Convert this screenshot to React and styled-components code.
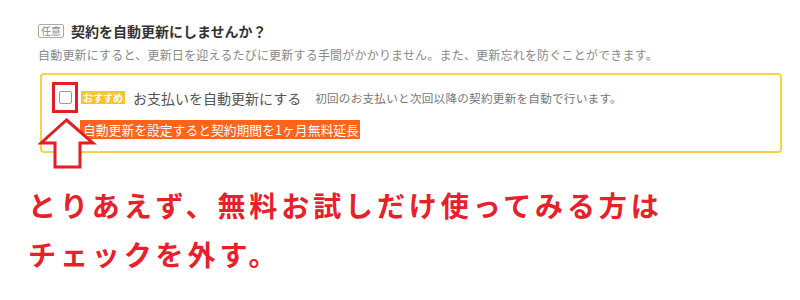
import React from "react";
import styled, { createGlobalStyle } from "styled-components";

const GlobalStyle = createGlobalStyle`
    body {
        margin: 0;
        background: #fff;
        font-family: "Noto Sans CJK JP", "Noto Sans", sans-serif;
    }
`;

const Page = styled.div`
    position: relative;
    width: 800px;
    height: 300px;
    padding: 20px 18px 0 38px;
    box-sizing: border-box;
    overflow: hidden;
`;
const TitleRow = styled.div`
    display: flex;
    align-items: center;
    gap: 7px;
    height: 22px;
`;
const Optional = styled.span`
    font-size: 10px;
    line-height: 12px;
    color: #888;
    border: 1px solid #aaa;
    border-radius: 2px;
    padding: 0 2px;
`;
const Title = styled.div`
    font-size: 14px;
    font-weight: bold;
    color: #333;
`;
const Lead = styled.div`
    margin-top: 4px;
    font-size: 12px;
    color: #888;
    letter-spacing: 0.2px;
`;
const Panel = styled.div`
    margin: 10px 0 0 2px;
    width: 742px;
    height: 80px;
    box-sizing: border-box;
    border: 2px solid #fad246;
    border-radius: 4px;
    padding: 7px 0 0 10px;
`;
const OptionRow = styled.div`
    display: flex;
    align-items: center;
    height: 31px;
`;
const Mark = styled.div`
    width: 26px;
    height: 31px;
    box-sizing: border-box;
    border: 3px solid #e31e24;
    display: flex;
    align-items: center;
    justify-content: center;
`;
const Check = styled.span`
    width: 11px;
    height: 11px;
    border: 1px solid #999;
    border-radius: 2px;
    background: #fff;
`;
const Badge = styled.span`
    margin-left: 3px;
    background: #f8c531;
    color: #fff;
    font-size: 10px;
    line-height: 13px;
    padding: 0 2px;
    font-weight: bold;
`;
const Label = styled.span`
    margin-left: 8px;
    font-size: 14px;
    color: #555;
`;
const Note = styled.span`
    margin-left: 14px;
    font-size: 11.6px;
    letter-spacing: 0.25px;
    color: #777;
`;
const Bonus = styled.div`
    margin: 7px 0 0 28px;
    display: inline-block;
    background: #ff6418;
    color: #fff;
    font-size: 12.8px;
    line-height: 19px;
    padding: 0 1px 0 3px;
`;
const Message = styled.div`
    margin: 28px 0 0 -10px;
    color: #e8202a;
    font-size: 28px;
    font-weight: bold;
    letter-spacing: 3.9px;
    line-height: 49px;
`;
const Arrow = styled.svg`
    position: absolute;
    left: 38px;
    top: 117px;
`;

const UpArrow = () => (
    <Arrow width="60" height="54" viewBox="38 117 60 54">
        <polygon
            points="66.5,120 93,143 80,143 80,167 55,167 55,143 41,143"
            fill="#fff"
            stroke="#e31e24"
            strokeWidth="3"
            strokeLinejoin="miter"
        />
    </Arrow>
);

const App = () => (
    <Page>
        <GlobalStyle />
        <TitleRow>
            <Optional>任意</Optional>
            <Title>契約を自動更新にしませんか？</Title>
        </TitleRow>
        <Lead>自動更新にすると、更新日を迎えるたびに更新する手間がかかりません。また、更新忘れを防ぐことができます。</Lead>
        <Panel>
            <OptionRow>
                <Mark>
                    <Check />
                </Mark>
                <Badge>おすすめ</Badge>
                <Label>お支払いを自動更新にする</Label>
                <Note>初回のお支払いと次回以降の契約更新を自動で行います。</Note>
            </OptionRow>
            <Bonus>自動更新を設定すると契約期間を1ヶ月無料延長</Bonus>
        </Panel>
        <UpArrow />
        <Message>
            とりあえず、無料お試しだけ使ってみる方は
            <br />
            チェックを外す。
        </Message>
    </Page>
);

export default App;
